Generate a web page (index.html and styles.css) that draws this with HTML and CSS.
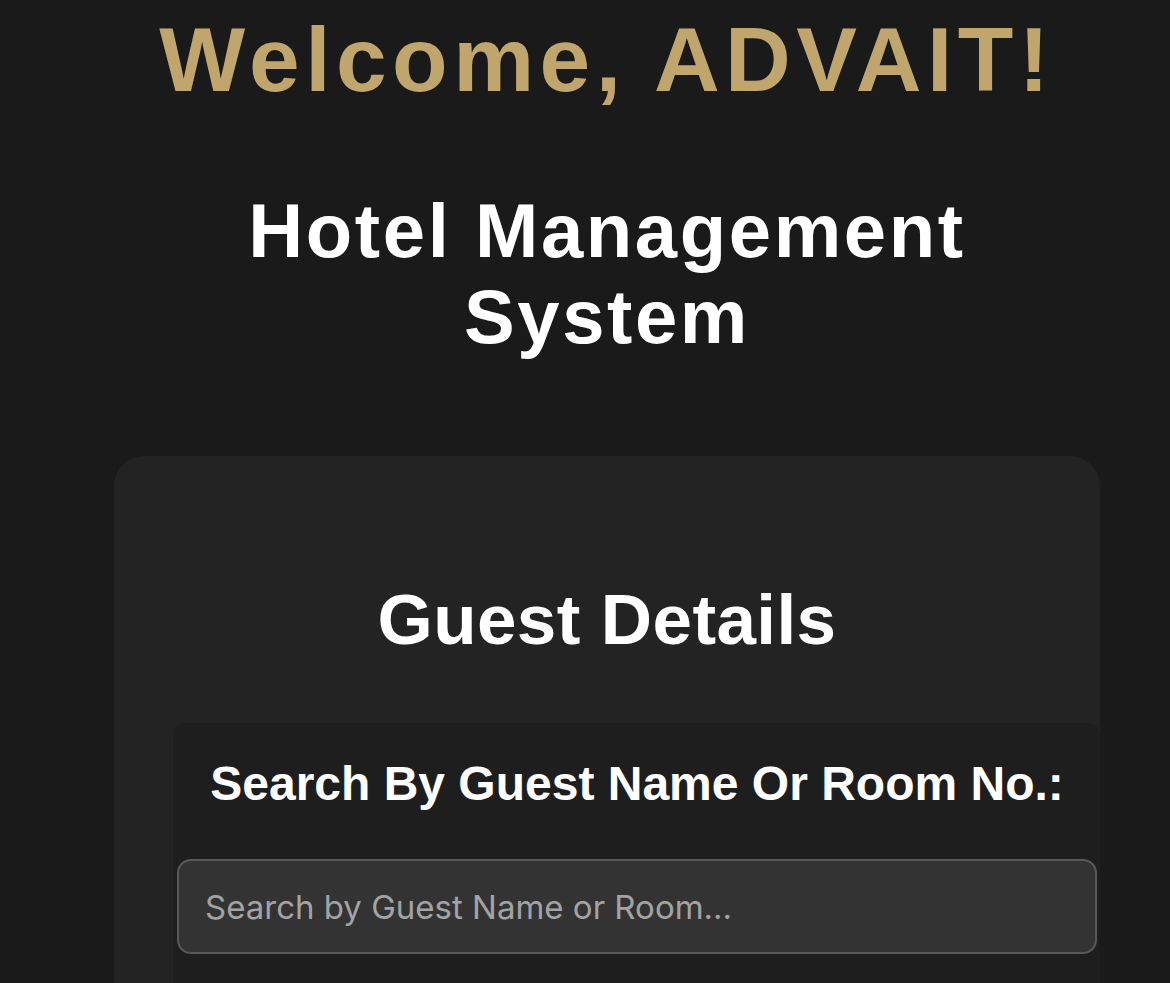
FILE: index.html
```html
<!DOCTYPE html>
<html lang="en">
<head>
<meta charset="utf-8">
<title>Hotel Management System</title>
<link rel="stylesheet" href="styles.css">
</head>
<body>
<div class="page">
  <h1 class="welcome">Welcome, ADVAIT!</h1>
  <h2 class="app-title">Hotel Management<br>System</h2>
  <section class="card">
    <h2 class="card-title">Guest Details</h2>
    <div class="search-panel">
      <h3 class="search-label">Search By Guest Name Or Room No.:</h3>
      <input class="search-input" type="text" placeholder="Search by Guest Name or Room...">
    </div>
  </section>
</div>
</body>
</html>
```
FILE: styles.css
```css
html, body {
  margin: 0;
  padding: 0;
  background: #1a1a1a;
}
body {
  font-family: "Liberation Sans", Arial, sans-serif;
  color: #ffffff;
  overflow: hidden;
}
.page {
  padding: 8px 70px 0 114px;
  text-align: center;
}
.welcome {
  margin: 0;
  font-size: 91px;
  line-height: normal;
  font-weight: 700;
  letter-spacing: 5.5px;
  color: #c0a66d;
}
.app-title {
  margin: 76px 0 0;
  font-size: 76px;
  line-height: 86px;
  font-weight: 700;
  letter-spacing: 2.6px;
  color: #ffffff;
}
.card {
  margin-top: 96px;
  background: #232323;
  border-radius: 30px 30px 0 0;
  padding: 123px 0 200px 0;
}
.card-title {
  margin: 0;
  font-size: 71px;
  line-height: normal;
  font-weight: 700;
  letter-spacing: 0.4px;
}
.search-panel {
  margin: 63px 0 0 59px;
  background: #1e1e1e;
  border-radius: 12px 12px 0 0;
  padding: 33px 3px 200px 4px;
}
.search-label {
  margin: 0 0 48px;
  font-size: 48px;
  line-height: 55px;
  font-weight: 700;
}
.search-input {
  display: block;
  box-sizing: border-box;
  width: 100%;
  height: 95px;
  margin: 0;
  padding: 0 26px;
  background: #333333;
  border: 2px solid #585858;
  border-radius: 14px;
  font-family: Inter, "Noto Sans", sans-serif;
  font-size: 33px;
  color: #ffffff;
  outline: none;
}
.search-input::placeholder {
  color: #a3a3a3;
}
```
